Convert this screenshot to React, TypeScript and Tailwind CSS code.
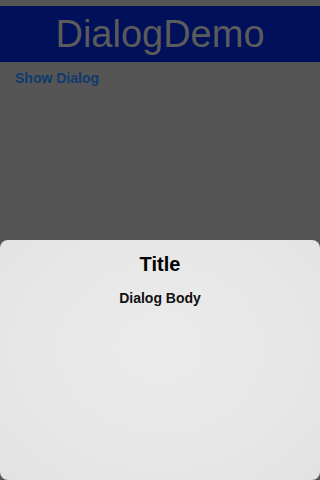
export default function App() {
  return (
    <div className="relative h-[480px] w-[320px] overflow-hidden bg-[#555555] font-['Liberation_Sans',Arial,sans-serif]">
      <div className="h-[6px] bg-[#555555]" />
      <div className="flex h-[56px] items-center justify-center bg-[#00105a]">
        <span className="text-[38px] leading-none text-[#5b5b5b]">DialogDemo</span>
      </div>
      <div className="px-[15px] pt-[4px]">
        <span className="text-[14px] font-bold leading-[18px] text-[#0e3a70]">Show Dialog</span>
      </div>

      <div className="absolute inset-x-0 bottom-0 flex h-[240px] flex-col items-center rounded-[8px] bg-[#e6e6e6] bg-[radial-gradient(ellipse_at_50%_45%,#ebebeb_0%,#e7e7e7_60%,#e2e2e2_100%)] pt-[12px]">
        <h1 className="text-[20px] font-bold leading-[24px] text-black">Title</h1>
        <p className="mt-[13px] text-[14px] font-bold leading-[18px] text-[#111]">Dialog Body</p>
      </div>
    </div>
  )
}
